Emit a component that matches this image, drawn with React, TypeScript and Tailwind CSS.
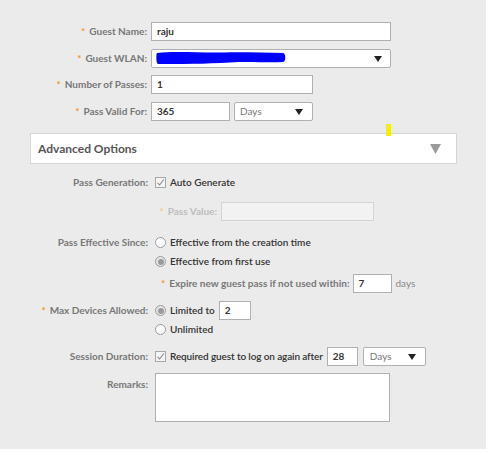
import React from "react";

const font = { fontFamily: "Lato, 'Noto Sans', sans-serif" };

function Star() {
  return <span className="text-[#f7941d] mr-[4px]">*</span>;
}

function Arrow() {
  return (
    <svg width="8" height="6" viewBox="0 0 8 6" className="shrink-0">
      <path d="M0 0 H8 L4 6 Z" fill="#222" />
    </svg>
  );
}

function Radio({ checked }: { checked?: boolean }) {
  return (
    <span
      className={`w-[11px] h-[11px] rounded-full border border-[#9a9a9a] flex items-center justify-center shrink-0 ${
        checked ? "bg-[#e6e6e6]" : "bg-white"
      }`}
    >
      {checked && <span className="w-[6px] h-[6px] rounded-full bg-[#9a9a9a]" />}
    </span>
  );
}

function Check() {
  return (
    <span className="w-[11px] h-[11px] border border-[#a8a8a8] bg-[#f4f4f4] flex items-center justify-center shrink-0">
      <svg width="9" height="9" viewBox="0 0 9 9">
        <path d="M1.5 4.8 L3.6 7 L7.8 1.5" fill="none" stroke="#8a8a8a" strokeWidth="1.1" />
      </svg>
    </span>
  );
}

function TopRow({ label, children, mt }: { label: string; children: React.ReactNode; mt: string }) {
  return (
    <div className={`flex items-center h-[19px] ${mt}`}>
      <div className="w-[147px] text-right text-[10px] font-bold text-[#777] whitespace-nowrap">
        <Star />
        {label}
      </div>
      <div className="ml-[4px] flex items-center h-full">{children}</div>
    </div>
  );
}

function AdvLabel({ children, star }: { children: React.ReactNode; star?: boolean }) {
  return (
    <div className="w-[148px] text-right text-[10px] font-bold text-[#777] shrink-0 leading-[19px] h-[19px] whitespace-nowrap">
      {star && <Star />}
      {children}
    </div>
  );
}

export default function App() {
  return (
    <div className="w-[490px] h-[452px] bg-white" style={font}>
      <div className="w-[486px] h-[449px] bg-[#ebebeb] relative flex flex-col pt-[22px]">
        <TopRow label="Guest Name:" mt="">
          <div className="w-[240px] h-[19px] bg-white border border-[#b0b0b0] flex items-center px-[5px] text-[10px] font-bold text-[#333]">
            raju
          </div>
        </TopRow>
        <TopRow label="Guest WLAN:" mt="mt-[8px]">
          <div className="w-[240px] h-[19px] bg-white border border-[#b0b0b0] rounded-[2px] flex items-center justify-between pl-[4px] pr-[8px] relative">
            <svg width="132" height="16" viewBox="0 0 132 16" className="absolute left-[3px] top-[0px]">
              <path
                d="M2 3 C20 1,45 3,70 2.5 C90 2,110 3,128 3 C131 3,131 12,128 12 C110 13,95 11,75 12.5 C50 14,25 14,3 14 C1 14,1 3,2 3 Z"
                fill="#0000ff"
              />
            </svg>
            <span />
            <Arrow />
          </div>
        </TopRow>
        <TopRow label="Number of Passes:" mt="mt-[7px]">
          <div className="w-[162px] h-[19px] bg-white border border-[#b0b0b0] flex items-center px-[5px] text-[10px] font-bold text-[#333]">
            1
          </div>
        </TopRow>
        <TopRow label="Pass Valid For:" mt="mt-[8px]">
          <div className="w-[79px] h-[19px] bg-white border border-[#b0b0b0] flex items-center px-[5px] text-[10px] font-bold text-[#333]">
            365
          </div>
          <div className="ml-[4px] w-[79px] h-[19px] bg-white border border-[#b0b0b0] rounded-[2px] flex items-center justify-between pl-[5px] pr-[9px] text-[10px] text-[#777]">
            Days
            <Arrow />
          </div>
        </TopRow>

        <div className="mt-[12px] ml-[30px] w-[427px] h-[31px] bg-white border border-[#d6d6d6] flex items-center justify-between pl-[7px] pr-[15px]">
          <span className="text-[12px] font-bold text-[#555]">Advanced Options</span>
          <svg width="11" height="10" viewBox="0 0 11 10">
            <path d="M0 0 H11 L5.5 10 Z" fill="#9c9c9c" />
          </svg>
        </div>
        <div className="absolute left-[386px] top-[124px] w-[5px] h-[12px] bg-[#f2f200]" />

        {/* Pass Generation */}
        <div className="flex mt-[9px]">
          <AdvLabel>Pass Generation:</AdvLabel>
          <div className="ml-[7px] flex items-center h-[19px] gap-[4px] text-[10px] font-semibold text-[#333]">
            <Check />
            Auto Generate
          </div>
        </div>

        {/* Pass Value */}
        <div className="flex items-center h-[19px] mt-[10px]">
          <div className="w-[217px] text-right text-[10px] font-bold text-[#bdbdbd] whitespace-nowrap">
            <span className="text-[#f9c88f] mr-[4px]">*</span>Pass Value:
          </div>
          <div className="ml-[4px] w-[153px] h-[19px] bg-[#f2f2f2] border border-[#d4d4d4]" />
        </div>

        {/* Pass Effective Since */}
        <div className="flex mt-[12px]">
          <AdvLabel>Pass Effective Since:</AdvLabel>
          <div className="ml-[7px] flex flex-col text-[10px] font-semibold text-[#333]">
            <div className="flex items-center h-[19px] gap-[4px]">
              <Radio />
              Effective from the creation time
            </div>
            <div className="flex items-center h-[19px] gap-[4px]">
              <Radio checked />
              Effective from first use
            </div>
            <div className="flex items-center h-[19px] mt-[3px] pl-[6px] whitespace-nowrap">
              <span className="font-bold text-[#777]">
                <Star />
                Expire new guest pass if not used within:
              </span>
              <div className="ml-[3px] w-[39px] h-[19px] bg-white border border-[#b0b0b0] flex items-center px-[5px] font-bold text-[#333]">
                7
              </div>
              <span className="ml-[4px] font-normal text-[#888]">days</span>
            </div>
          </div>
        </div>

        {/* Max Devices */}
        <div className="flex mt-[8px]">
          <AdvLabel star>Max Devices Allowed:</AdvLabel>
          <div className="ml-[7px] flex flex-col text-[10px] font-semibold text-[#333]">
            <div className="flex items-center h-[19px] gap-[4px]">
              <Radio checked />
              Limited to
              <div className="w-[32px] h-[19px] bg-white border border-[#b0b0b0] flex items-center px-[5px] font-bold text-[#333]">
                2
              </div>
            </div>
            <div className="flex items-center h-[19px] gap-[4px]">
              <Radio />
              Unlimited
            </div>
          </div>
        </div>

        {/* Session Duration */}
        <div className="flex mt-[8px]">
          <AdvLabel>Session Duration:</AdvLabel>
          <div className="ml-[7px] flex items-center h-[19px] gap-[4px] text-[10px] font-semibold text-[#333] whitespace-nowrap">
            <Check />
            <span className="tracking-[-0.12px]">Required guest to log on again after</span>
            <div className="w-[31px] h-[19px] bg-white border border-[#b0b0b0] flex items-center px-[5px] font-bold text-[#333]">
              28
            </div>
            <div className="ml-[1px] w-[63px] h-[19px] bg-white border border-[#b0b0b0] rounded-[2px] flex items-center justify-between pl-[6px] pr-[9px] font-normal text-[#777]">
              Days
              <Arrow />
            </div>
          </div>
        </div>

        {/* Remarks */}
        <div className="flex mt-[7px]">
          <div className="w-[148px] text-right text-[10px] font-bold text-[#777] pt-[4px]">Remarks:</div>
          <div className="ml-[7px] w-[235px] h-[49px] bg-white border border-[#b0b0b0]" />
        </div>
      </div>
    </div>
  );
}
